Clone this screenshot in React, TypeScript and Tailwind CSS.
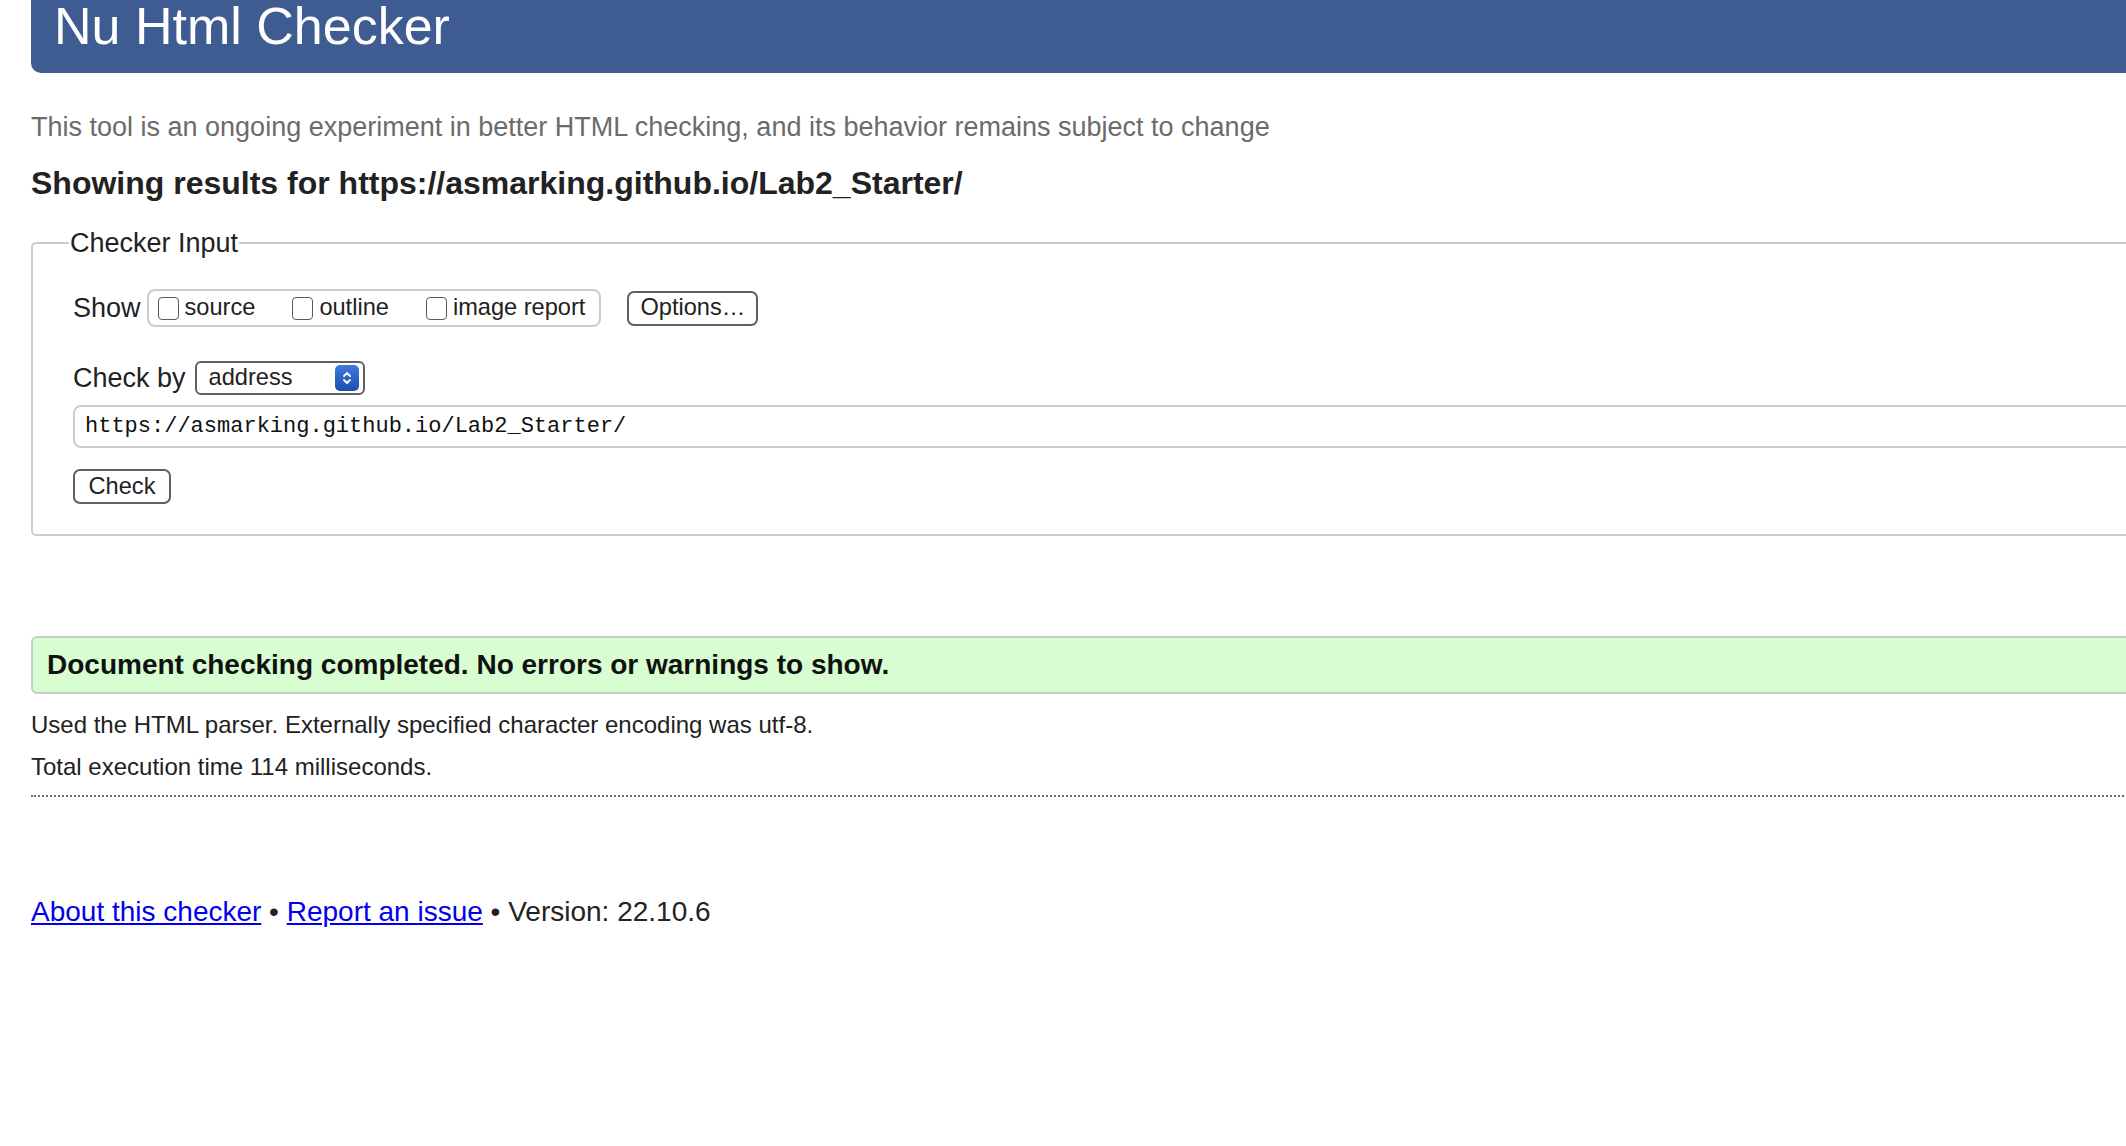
import { useState } from 'react';

const FONT = { fontFamily: '"Liberation Sans", Arial, sans-serif' };

function Box({ label, checked, onToggle }: { label: string; checked: boolean; onToggle: () => void }) {
  return (
    <label className="flex items-center gap-[6px] cursor-pointer" onClick={onToggle}>
      <span className="w-[21px] h-[23px] rounded-[4px] border-[1.5px] border-[#5a5a5a] bg-white flex items-center justify-center">
        {checked && <span className="w-[11px] h-[11px] bg-[#2b5fc0] rounded-[2px]" />}
      </span>
      <span className="text-[23.6px] leading-none text-[#222]">{label}</span>
    </label>
  );
}

export default function App() {
  const [show, setShow] = useState({ source: false, outline: false, image: false });
  const [url, setUrl] = useState('https://asmarking.github.io/Lab2_Starter/');

  return (
    <div className="w-[2126px] h-[1146px] overflow-hidden bg-white text-[#222]" style={FONT}>
      <div className="w-[2240px] ml-[31px]">
        {/* Title bar, scrolled slightly out of view */}
        <header className="h-[73px] bg-[#3e5c92] rounded-bl-[10px] pl-[23px] flex items-start">
          <h1 className="text-[52px] leading-[52px] text-white">Nu Html Checker</h1>
        </header>

        <p className="mt-[38px] text-[27px] leading-[32px] text-[#6b6b6b]">
          This tool is an ongoing experiment in better HTML checking, and its behavior remains subject to change
        </p>
        <h2 className="mt-[21px] text-[32px] leading-[38px] font-bold text-[#222]">
          Showing results for https://asmarking.github.io/Lab2_Starter/
        </h2>

        <fieldset className="mt-[25px] border-2 border-[#cccccc] rounded-[5px] pl-[40px] pb-[30px]">
          <legend className="-ml-[4px] text-[27px] leading-[32px] text-[#222] px-[1px]">Checker Input</legend>

          <div className="mt-[30px] flex items-center h-[38px]">
            <span className="text-[27px] leading-none mr-[6px]">Show</span>
            <div className="h-[38px] flex items-center border-2 border-[#cccccc] rounded-[8px] pl-[9px] pr-[14px]">
              <Box label="source" checked={show.source} onToggle={() => setShow(p => ({ ...p, source: !p.source }))} />
              <div className="w-[37px]" />
              <Box label="outline" checked={show.outline} onToggle={() => setShow(p => ({ ...p, outline: !p.outline }))} />
              <div className="w-[37px]" />
              <Box label="image report" checked={show.image} onToggle={() => setShow(p => ({ ...p, image: !p.image }))} />
            </div>
            <button className="ml-[26px] w-[131px] h-[35px] border-2 border-[#5f5f5f] rounded-[7px] text-[23.6px] leading-none text-[#222] bg-white">
              Options…
            </button>
          </div>

          <div className="mt-[34px] flex items-center h-[34px]">
            <span className="text-[27px] leading-none mr-[9px]">Check by</span>
            <div className="w-[170px] h-[34px] border-2 border-[#5f5f5f] rounded-[6px] flex items-center justify-between pl-[12px] pr-[4px]">
              <span className="text-[23.6px] leading-none text-[#222]">address</span>
              <span className="w-[24px] h-[26px] rounded-[5px] bg-gradient-to-b from-[#3d7ae0] to-[#1d4fae] flex items-center justify-center">
                <svg width="10" height="16" viewBox="0 0 10 16" fill="none" stroke="white" strokeWidth="1.8" strokeLinecap="round" strokeLinejoin="round">
                  <path d="M2 6 L5 3 L8 6" />
                  <path d="M2 10 L5 13 L8 10" />
                </svg>
              </span>
            </div>
          </div>

          <input
            value={url}
            onChange={e => setUrl(e.target.value)}
            className="mt-[10px] block w-full h-[43px] border-2 border-[#cccccc] rounded-[8px] px-[10px] text-[22px] text-[#111] outline-none"
            style={{ fontFamily: '"Liberation Mono", "DejaVu Sans Mono", monospace' }}
          />

          <button className="mt-[21px] block w-[98px] h-[35px] border-2 border-[#5f5f5f] rounded-[7px] text-[23.6px] leading-none text-[#222] bg-white">
            Check
          </button>
        </fieldset>

        <div className="mt-[100px] h-[58px] border-2 border-[#cccccc] rounded-l-[6px] bg-[#d7fdd1] flex items-center pl-[14px]">
          <p className="text-[28px] font-bold text-[#111]">Document checking completed. No errors or warnings to show.</p>
        </div>

        <p className="mt-[16px] text-[24px] leading-[30px] text-[#222]">
          Used the HTML parser. Externally specified character encoding was utf-8.
        </p>
        <p className="mt-[12px] text-[24px] leading-[30px] text-[#222]">Total execution time 114 milliseconds.</p>
        <div className="mt-[13px] border-t-2 border-dotted border-[#6b6b6b]" />

        <p className="mt-[98px] text-[28px] leading-[34px] text-[#222]">
          <a href="#" className="text-[#0000ee] underline">About this checker</a>
          {' • '}
          <a href="#" className="text-[#0000ee] underline">Report an issue</a>
          {' • Version: 22.10.6'}
        </p>
      </div>
    </div>
  );
}
